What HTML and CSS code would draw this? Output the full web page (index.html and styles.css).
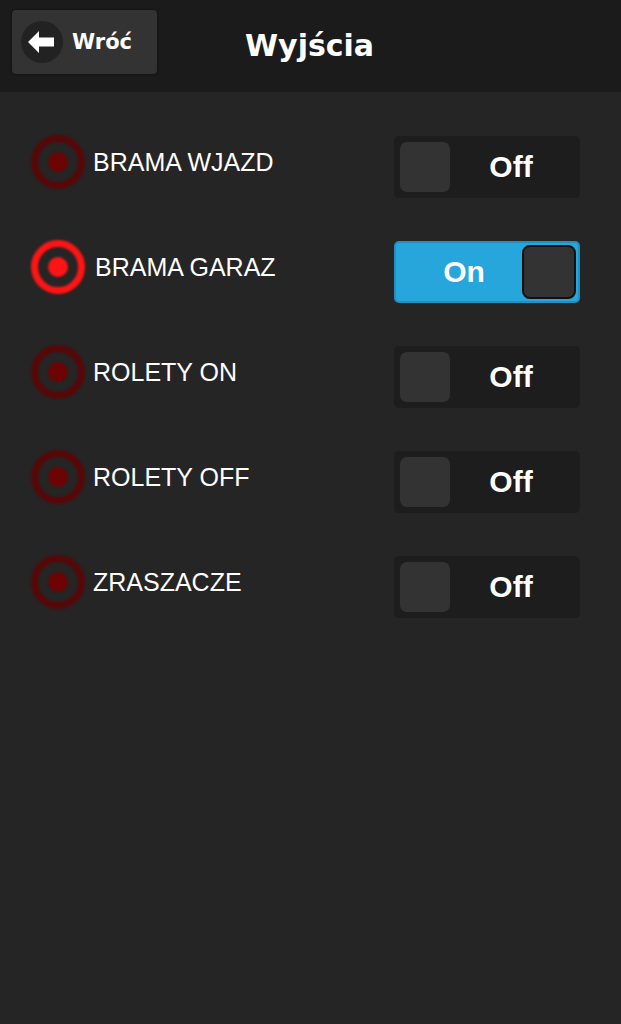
FILE: index.html
```html
<!DOCTYPE html>
<html lang="pl">

<head>
    <meta charset="UTF-8">
    <meta name="viewport" content="width=device-width, initial-scale=1.0">
    <title>Wyjścia</title>
    <link rel="stylesheet" href="styles.css">
</head>

<body>
    <div class="header">
        <button class="back-btn">
            <span class="back-icon">
                <svg width="28" height="24" viewBox="0 0 28 24">
                    <path d="M1 12 L12 1 L12 7.5 L27 7.5 L27 16.5 L12 16.5 L12 23 Z" fill="#fff" />
                </svg>
            </span>
            <span>Wróć</span>
        </button>
        <h1>Wyjścia</h1>
    </div>

    <div class="outputs">
        <div class="output-row">
            <div class="output-name">
                <span class="led"></span>
                <span class="label">BRAMA WJAZD</span>
            </div>
            <div class="switch">
                <span class="knob"></span>
                <span class="state">Off</span>
            </div>
        </div>

        <div class="output-row">
            <div class="output-name">
                <span class="led active"></span>
                <span class="label">BRAMA GARAZ</span>
            </div>
            <div class="switch on">
                <span class="state">On</span>
                <span class="knob"></span>
            </div>
        </div>

        <div class="output-row">
            <div class="output-name">
                <span class="led"></span>
                <span class="label">ROLETY ON</span>
            </div>
            <div class="switch">
                <span class="knob"></span>
                <span class="state">Off</span>
            </div>
        </div>

        <div class="output-row">
            <div class="output-name">
                <span class="led"></span>
                <span class="label">ROLETY OFF</span>
            </div>
            <div class="switch">
                <span class="knob"></span>
                <span class="state">Off</span>
            </div>
        </div>

        <div class="output-row">
            <div class="output-name">
                <span class="led"></span>
                <span class="label">ZRASZACZE</span>
            </div>
            <div class="switch">
                <span class="knob"></span>
                <span class="state">Off</span>
            </div>
        </div>
    </div>
</body>

</html>
```

FILE: styles.css
```css
* {
    margin: 0;
    padding: 0;
    box-sizing: border-box;
}

body {
    font-family: 'Liberation Sans', Arial, sans-serif;
    background-color: #252525;
    color: #fff;
    height: 1024px;
    overflow: hidden;
}

.header {
    height: 92px;
    background-color: #1b1b1b;
    display: flex;
    align-items: flex-start;
    padding: 10px 12px;
}

.back-btn {
    width: 145px;
    height: 64px;
    background-color: #333;
    border: none;
    border-radius: 4px;
    display: flex;
    align-items: center;
    padding-left: 9px;
    gap: 9px;
    color: #fff;
    font-family: 'DejaVu Sans', sans-serif;
    font-weight: bold;
    font-size: 21px;
    cursor: pointer;
    box-shadow: 0 0 3px rgba(0, 0, 0, 0.6);
}

.back-icon {
    width: 42px;
    height: 42px;
    border-radius: 50%;
    background-color: #222;
    display: flex;
    align-items: center;
    justify-content: center;
}

.back-icon svg {
    margin-left: -2px;
}

.header h1 {
    font-family: 'DejaVu Sans', sans-serif;
    font-size: 30px;
    font-weight: bold;
    margin-left: 88px;
    margin-top: 18px;
}

.outputs {
    display: flex;
    flex-direction: column;
    gap: 43px;
    padding: 44px 41px 0 31px;
}

.output-row {
    display: flex;
    justify-content: space-between;
    align-items: center;
}

.output-name {
    display: flex;
    align-items: center;
    gap: 8px;
    margin-top: -10px;
}

.led {
    width: 54px;
    height: 54px;
    border-radius: 50%;
    border: 7px solid #580707;
    display: flex;
    align-items: center;
    justify-content: center;
    filter: blur(0.8px);
}

.led::after {
    content: "";
    width: 20px;
    height: 20px;
    border-radius: 50%;
    background-color: #6e0303;
}

.led.active {
    border-color: #ff1414;
}

.led.active::after {
    background-color: #ff1414;
}

.led.active + .label {
    margin-left: 2px;
}

.label {
    font-size: 25px;
}

.switch {
    width: 186px;
    height: 62px;
    background-color: #1d1d1d;
    border-radius: 5px;
    display: flex;
    align-items: center;
    padding: 6px;
}

.switch .knob {
    width: 50px;
    height: 50px;
    background-color: #333;
    border-radius: 7px;
}

.switch .state {
    flex: 1;
    text-align: center;
    font-weight: bold;
    font-size: 30px;
    padding-right: 2px;
}

.switch.on {
    background-color: #27a6dc;
    border: 2px solid #1f8fc4;
    padding: 2px;
}

.switch.on .state {
    padding-right: 0;
    padding-left: 8px;
}

.switch.on .knob {
    width: 54px;
    height: 54px;
    border: 2px solid #101010;
    border-radius: 8px;
}
```
